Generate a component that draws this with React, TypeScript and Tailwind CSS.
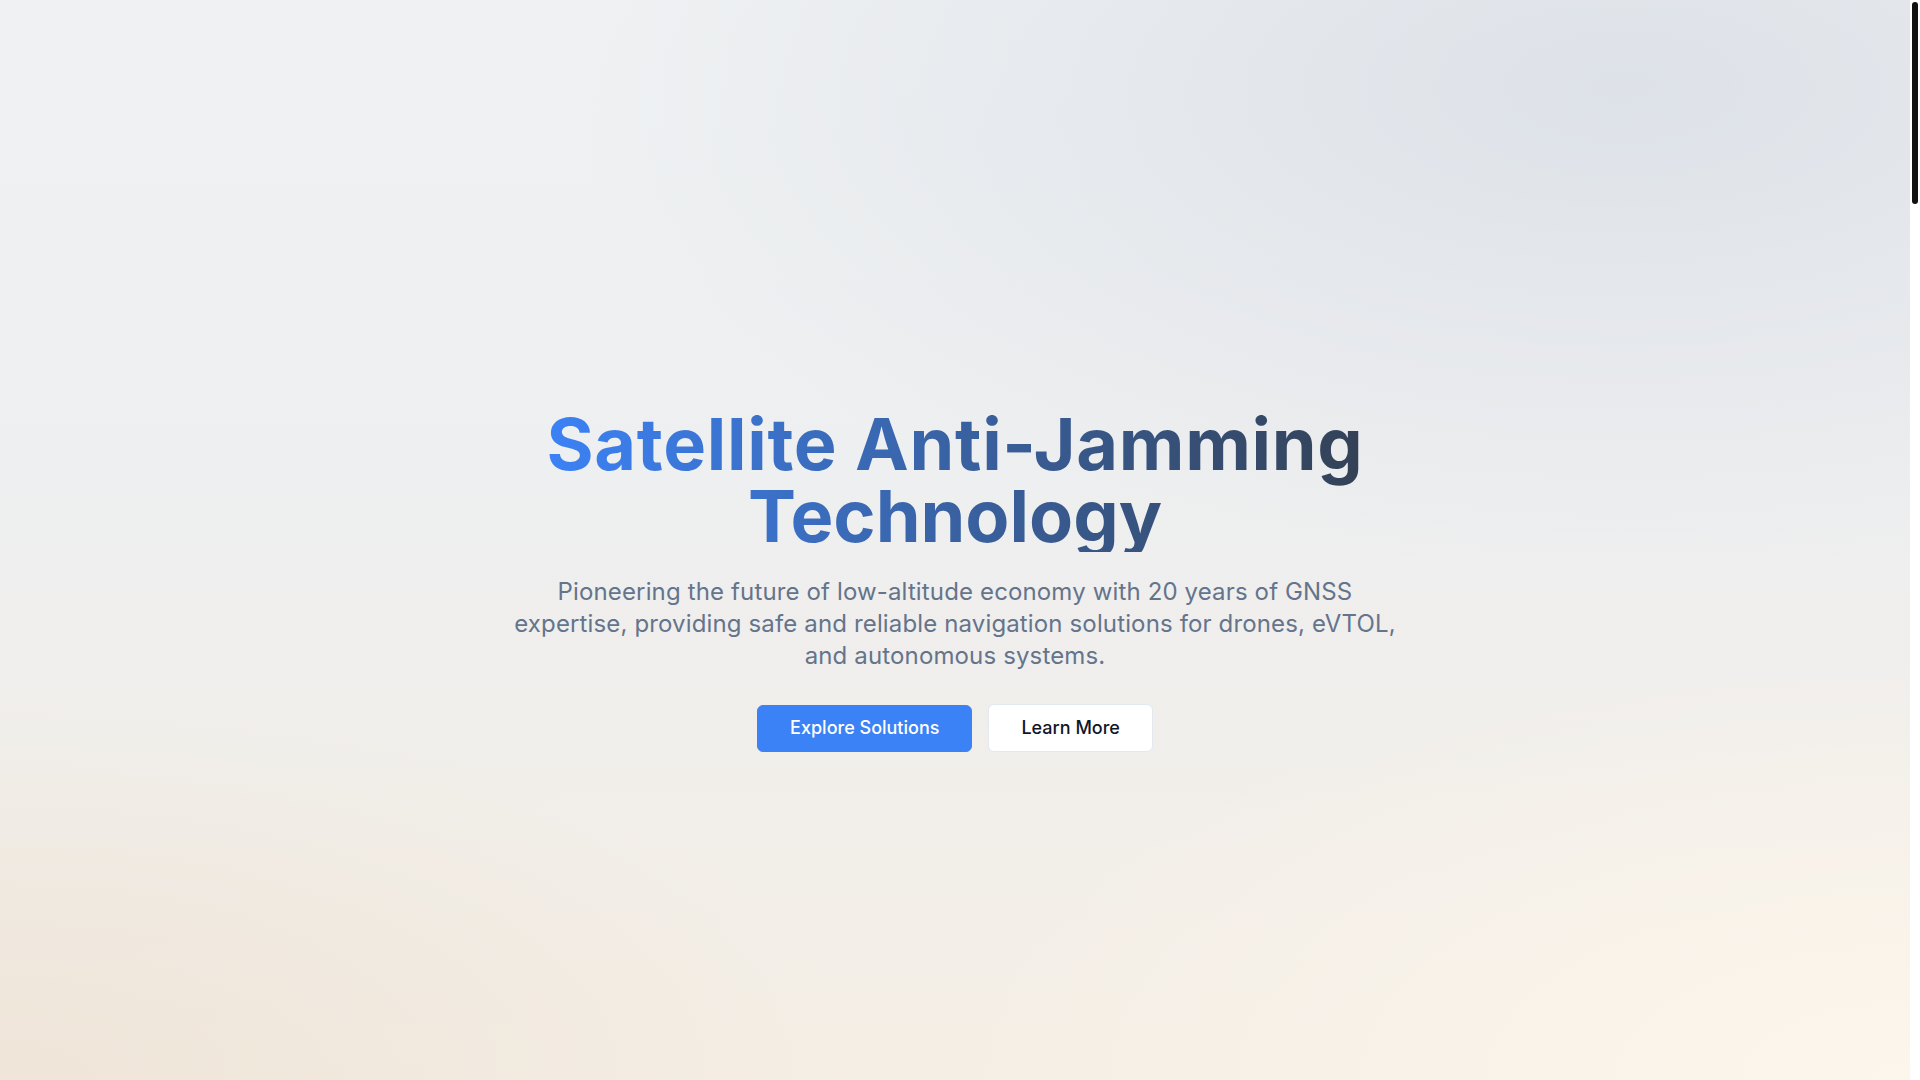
function ScrollRail() {
  // the page's scrollbar as it shows in the capture
  return (
    <aside className="flex w-[10px] shrink-0 flex-col bg-white pt-[2px] pl-[2px]">
      <div className="h-[202px] w-[6px] rounded-full bg-[#111111]" />
    </aside>
  );
}

export default function App() {
  return (
    <div className="flex h-screen overflow-hidden font-['Inter',sans-serif] text-slate-900">
      <main className="relative flex min-w-0 flex-1 items-center justify-center overflow-hidden bg-[linear-gradient(to_bottom,#eff1f3_0%,#eeeff0_45%,#f1eeea_72%,#f5eee5_100%)] px-6 pt-20">
        <div className="pointer-events-none absolute inset-0 bg-[radial-gradient(ellipse_55%_45%_at_85%_8%,rgba(206,213,223,0.55),transparent)]" />
        <div className="pointer-events-none absolute inset-0 bg-[radial-gradient(ellipse_45%_35%_at_0%_100%,rgba(236,224,210,0.7),transparent)]" />
        <div className="pointer-events-none absolute inset-0 bg-[radial-gradient(ellipse_50%_40%_at_100%_100%,rgba(253,246,236,0.95),transparent)]" />
        <div className="relative mx-auto flex max-w-4xl flex-col items-center text-center">
          <h1 className="mb-6 inline-block bg-gradient-to-r from-[#3b82f6] to-[#334155] bg-clip-text text-7xl leading-none font-bold text-transparent">
            <span className="tracking-[0.7px]">Satellite Anti-Jamming</span>
            <br />
            Technology
          </h1>
          <p className="mb-8 max-w-4xl text-2xl leading-8 tracking-[0.14px] text-[#64748b]">
            Pioneering the future of low-altitude economy with 20 years of GNSS expertise, providing safe and reliable
            navigation solutions for drones, eVTOL, and autonomous systems.
          </p>
          <div className="flex items-center justify-center gap-4">
            <button className="h-[47px] rounded-md border border-[#3b82f6] bg-[#3b82f6] px-8 text-lg font-medium text-white">
              Explore Solutions
            </button>
            <button className="h-12 rounded-md border border-[#e2e8f0] bg-white px-8 text-lg font-medium text-[#0f172a]">
              Learn More
            </button>
          </div>
        </div>
      </main>
      <ScrollRail />
    </div>
  );
}
